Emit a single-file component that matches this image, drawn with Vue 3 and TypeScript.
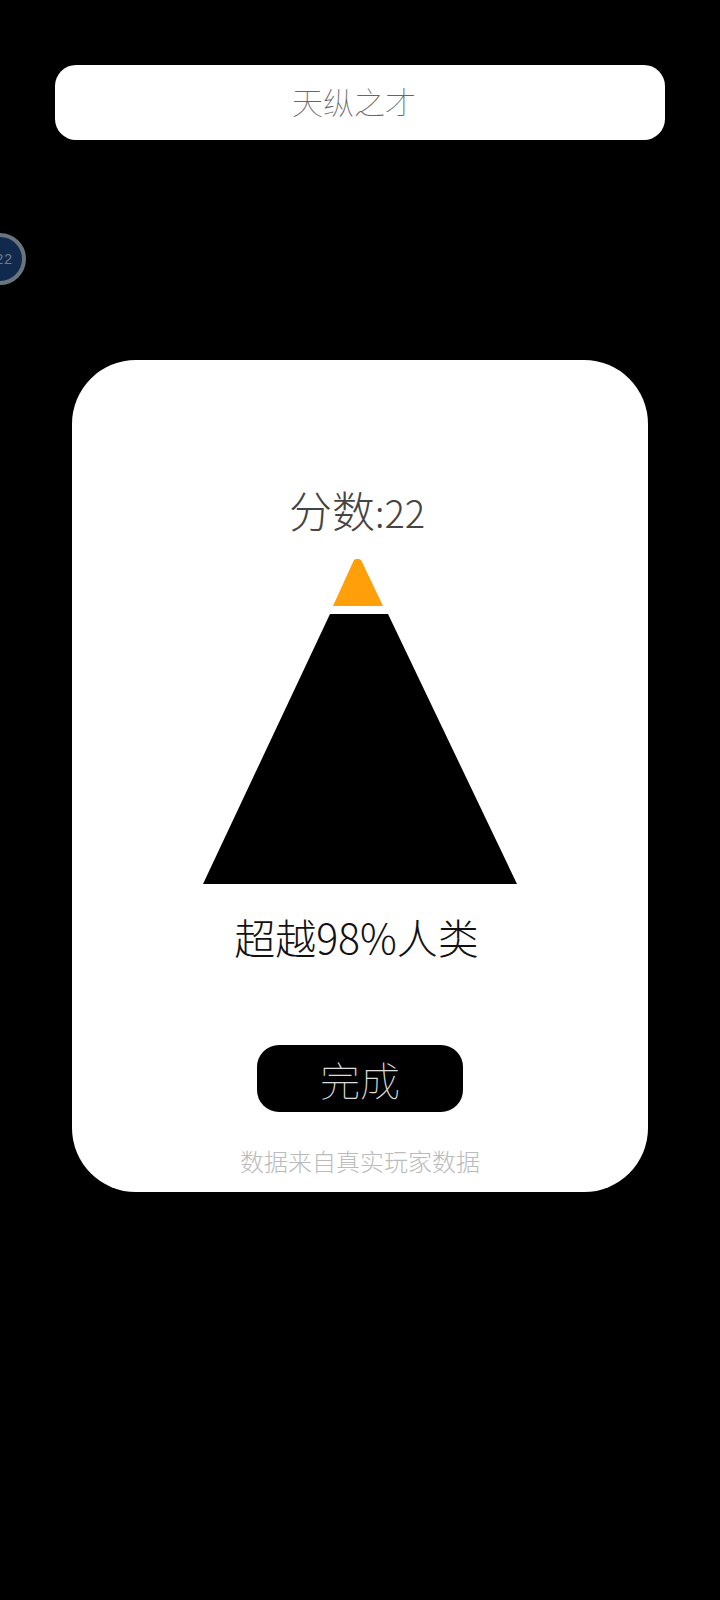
<script setup lang="ts">
const score: number = 22
</script>

<template>
  <main class="page">
    <div class="badge"><span>{{ score }}</span></div>
    <header class="rank-bar"><span>天纵之才</span></header>
    <section class="card">
      <h1 class="score">分数<span class="num">:{{ score }}</span></h1>
      <svg class="pyramid" viewBox="0 0 314 326" width="314" height="326" aria-hidden="true">
        <path class="peak" d="M130 48 L150 4 Q151 1 153 1 L156 1 Q158 1 159 4 L180 48 Z" />
        <path d="M127 56 L185 56 L314 326 L0 326 Z" />
      </svg>
      <p class="rank">超越98%人类</p>
      <button class="done" type="button">完成</button>
      <p class="source">数据来自真实玩家数据</p>
    </section>
  </main>
</template>

<style>
html, body { margin: 0; background: #000; }
</style>

<style scoped>
.page {
  position: relative;
  height: 1600px;
  overflow: hidden;
  background: #000;
  padding-top: 65px;
  box-sizing: border-box;
  font-family: "Noto Sans CJK SC", "Noto Sans", sans-serif;
}
.badge {
  position: absolute;
  left: -26px;
  top: 233px;
  width: 52px;
  height: 52px;
  box-sizing: border-box;
  border: 4px solid #69747c;
  border-radius: 50%;
  background: #11294c;
  display: flex;
  align-items: center;
  justify-content: flex-end;
  padding-right: 9px;
  color: #6f7d8a;
  font-size: 14px;
  letter-spacing: 1px;
  font-family: "Liberation Sans", sans-serif;
}
.rank-bar {
  width: 610px;
  height: 75px;
  margin: 0 auto;
  border-radius: 21px;
  background: #fff;
  display: flex;
  align-items: center;
  justify-content: center;
  color: #666;
  font-size: 31px;
  font-weight: 100;
}
.rank-bar span {
  margin: -4px 12px 0 0;
}
.card {
  width: 576px;
  height: 832px;
  margin: 220px 0 0 72px;
  border-radius: 64px;
  background: #fff;
  display: flex;
  flex-direction: column;
  align-items: center;
  box-sizing: border-box;
  padding-top: 126px;
}
.score {
  margin: 0 6px 0 0;
  height: 46px;
  line-height: 46px;
  font-size: 43px;
  font-weight: 300;
  color: #444;
}
.num {
  font-size: 38px;
}
.pyramid {
  display: block;
  margin-top: 26px;
  margin-left: -1px;
}
.pyramid path { fill: #000; }
.pyramid .peak { fill: #ff9f0a; }
.rank {
  margin: 28px 7px 0 0;
  height: 48px;
  line-height: 48px;
  font-size: 41px;
  font-weight: 300;
  color: #111;
}
.done {
  width: 206px;
  height: 67px;
  margin-top: 85px;
  border: 0;
  border-radius: 22px;
  background: #000;
  color: #ddd;
  font: 100 40px "Noto Sans CJK SC", sans-serif;
  padding: 0;
}
.source {
  margin: 32px 0 0;
  line-height: 34px;
  font-size: 24px;
  font-weight: 300;
  color: #bbb;
}
</style>
